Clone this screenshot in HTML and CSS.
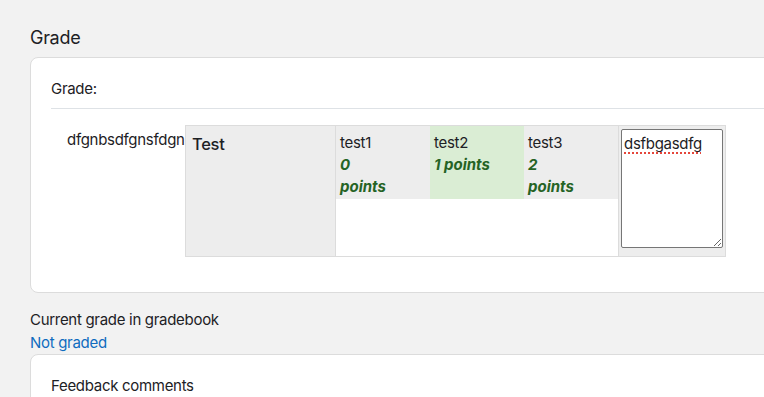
FILE: index.html
```html
<!DOCTYPE html>
<html lang="en">
<head>
  <meta charset="UTF-8">
  <title>Grade</title>
  <link rel="stylesheet" href="styles.css">
</head>
<body>
  <div class="page">
    <h3 class="section-title">Grade</h3>

    <!-- Rubric grading card -->
    <div class="card">
      <div class="card-label">Grade:</div>
      <hr class="divider">
      <div class="rubric-row">
        <div class="criterion-name">dfgnbsdfgnsfdgn</div>
        <table class="rubric">
          <tr>
            <td class="description">Test</td>
            <td class="levels">
              <table class="levels-table">
                <tr>
                  <td class="level">
                    <div class="level-def">test1</div>
                    <div class="score">0<br>points</div>
                  </td>
                  <td class="level checked">
                    <div class="level-def">test2</div>
                    <div class="score">1 points</div>
                  </td>
                  <td class="level">
                    <div class="level-def">test3</div>
                    <div class="score">2<br>points</div>
                  </td>
                </tr>
              </table>
            </td>
            <td class="remark">
              <div class="remark-box"><span class="misspelt">dsfbgasdfg</span></div>
            </td>
          </tr>
        </table>
      </div>
    </div>

    <div class="gradebook">
      <div>Current grade in gradebook</div>
      <a class="link" href="#">Not graded</a>
    </div>

    <!-- Feedback card -->
    <div class="card card-feedback">
      <div class="card-label">Feedback comments</div>
    </div>
  </div>
</body>
</html>
```

FILE: styles.css
```css
/* Page base */
body {
  margin: 0;
  background-color: #f2f2f2;
  color: #1d2125;
  font-family: Inter, "Noto Sans", sans-serif;
  font-size: 15px;
  line-height: 1.5;
  letter-spacing: -0.3px;
  overflow: hidden;
}
.page {
  padding: 27px 0 0 30px;
}
.section-title {
  margin: 0 0 8px;
  font-size: 18px;
  font-weight: 400;
  line-height: 1.2;
}

/* Cards run off the right edge of the window */
.card {
  width: 820px;
  box-sizing: border-box;
  background-color: #fff;
  border: 1px solid #dcdcdc;
  border-radius: 8px;
  padding: 20px 20px 35px;
}
.divider {
  margin: 8px 0 16px;
  border: 0;
  border-top: 1px solid #dee2e6;
}

/* Rubric */
.rubric-row {
  display: flex;
  align-items: flex-start;
}
.criterion-name {
  padding: 4px 0 0 16px;
  width: 118px;
  white-space: nowrap;
}
.rubric {
  border-collapse: collapse;
  table-layout: fixed;
  border: 1px solid #dcdcdc;
}
.rubric td {
  padding: 0;
  vertical-align: top;
}
.description {
  width: 143px;
  background-color: #ededed;
  border-right: 1px solid #dcdcdc;
  padding: 9px 0 0 6px !important;
  font-size: 16.5px;
  font-weight: 500;
  line-height: 1.2;
}
.levels {
  width: 282px;
  background-color: #fff;
}
.levels-table {
  border-collapse: collapse;
  table-layout: fixed;
  width: 282px;
}
.level {
  width: 94px;
  box-sizing: border-box;
  height: 73px;
  background-color: #ededed;
  padding: 6px 4px 1px !important;
  line-height: 22px;
}
.level.checked {
  background-color: #daedd4;
}
.score {
  color: #256325;
  font-weight: 700;
  font-style: italic;
  letter-spacing: 0;
}
.remark {
  width: 104px;
  background-color: #ededed;
  border-left: 1px solid #dcdcdc;
  padding: 3px 0 8px 2px !important;
}
.remark-box {
  width: 102px;
  height: 119px;
  background-color: #fff;
  border: 1px solid #767676;
  border-radius: 2px;
  padding: 3px 2px 0;
  box-sizing: border-box;
  line-height: 22px;
  overflow: auto;
  resize: both;
}
.misspelt {
  text-decoration: underline dotted #e5463b;
  text-decoration-thickness: 2px;
  text-underline-offset: 3px;
}

/* Gradebook status */
.gradebook {
  margin-top: 16px;
}
.link {
  color: #0f6cbf;
  text-decoration: none;
}
.card-feedback {
  padding-bottom: 40px;
}
```
